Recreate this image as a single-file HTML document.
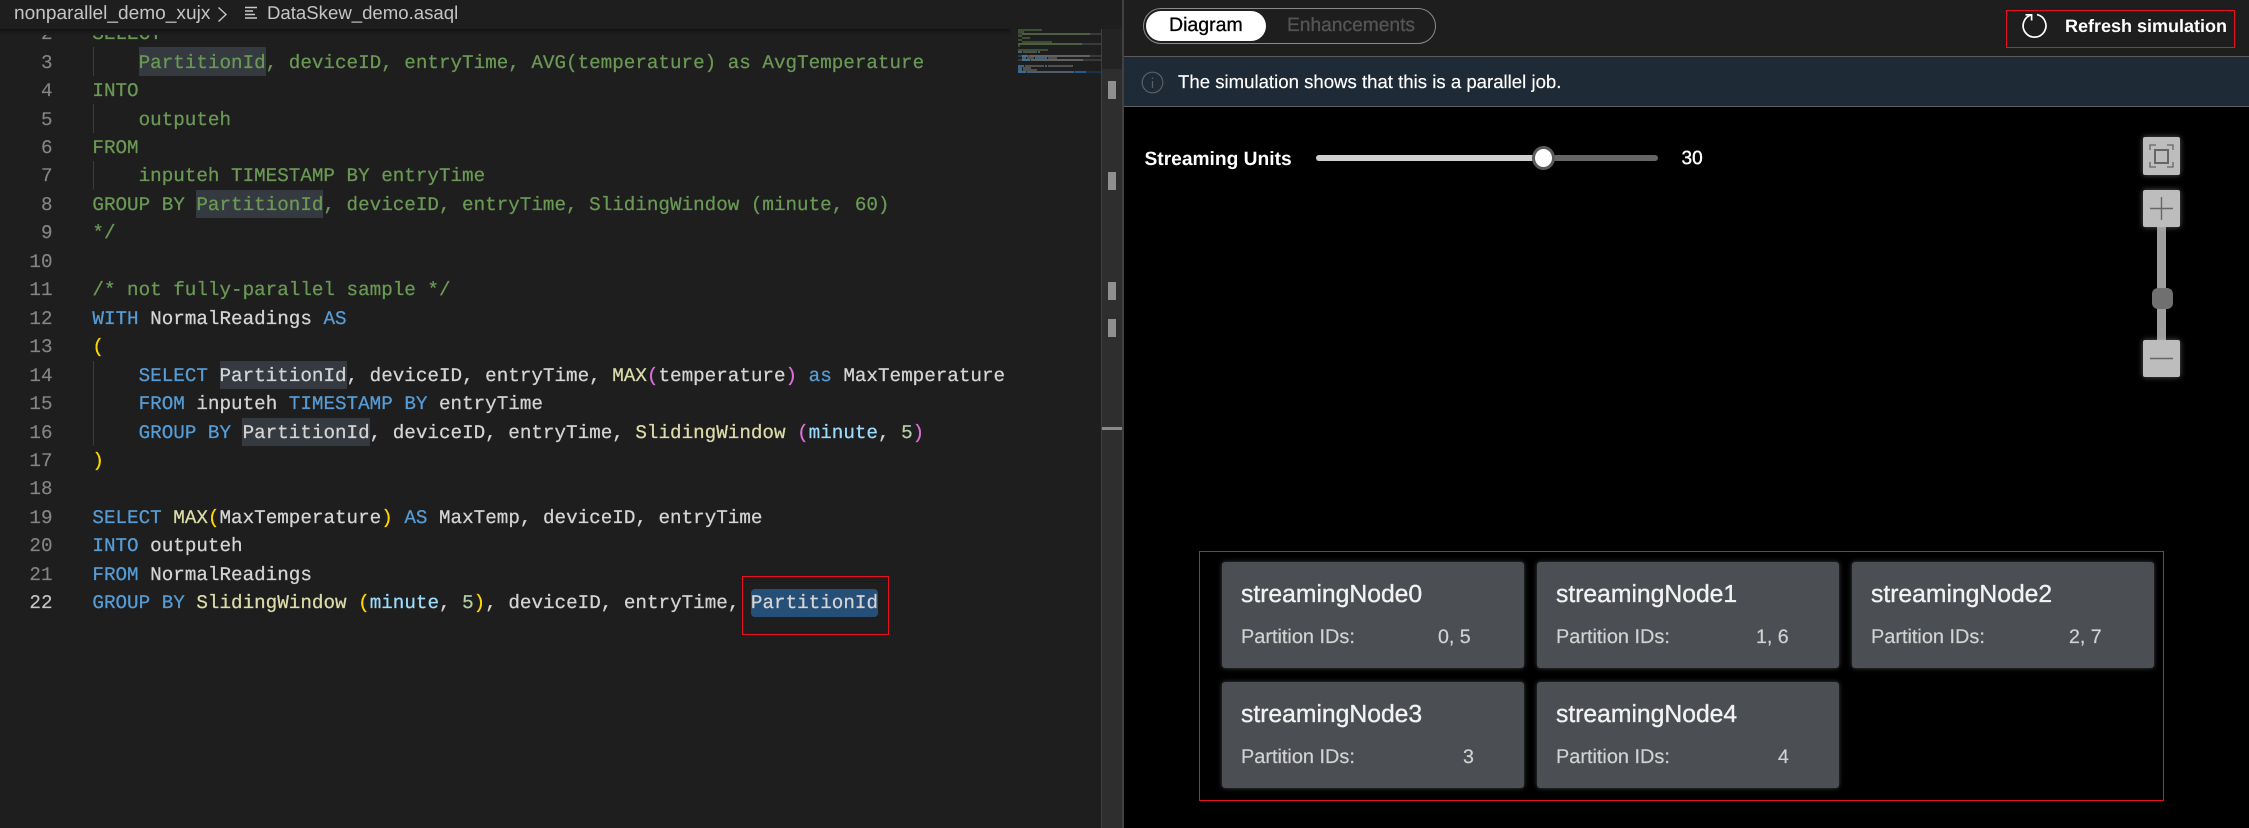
<!DOCTYPE html>
<html><head><meta charset="utf-8"><title>DataSkew_demo.asaql</title>
<style>
html,body{margin:0;padding:0;background:#000;width:2249px;height:828px;overflow:hidden}
*{box-sizing:border-box}
body{position:relative;font-family:"Liberation Sans",sans-serif;text-rendering:geometricPrecision}
.a{position:absolute}
.t{position:absolute;white-space:nowrap;line-height:1}
#left{left:0;top:0;width:1124px;height:828px;background:#1e1e1e;overflow:hidden}
#hdr{left:0;top:0;width:1124px;height:29px;background:#1e1e1e;z-index:5}
#shadow{left:0;top:29px;width:1010px;height:6px;background:linear-gradient(#131313,#1e1e1e);z-index:4}
#code{left:0;top:20.2px;width:1101px;font:19.25px/28.46px "Liberation Mono",monospace;color:#d4d4d4;z-index:2;-webkit-text-stroke:.25px}
#code div{height:28.46px;position:relative;white-space:pre;padding-left:92.4px}
#code div b{font-weight:normal;position:absolute;right:1048.5px;top:0;color:#858585;-webkit-text-stroke:.15px}
#code div.cur b{color:#c6c6c6}
.c{color:#6a9955}.k{color:#569cd6}.f{color:#dcdcaa}.g{color:#ffd700}.p{color:#da70d6}.v{color:#9cdcfe}.n{color:#b5cea8}
.hl{position:absolute;background:#343a40;z-index:1}
.ig{position:absolute;left:92.5px;width:1px;background:#3c3c3c;z-index:1}
.red{position:absolute;border:1.5px solid #e81123;z-index:6}
.card{position:absolute;width:302px;height:106px;background:#4b4e52;border-radius:3px;box-shadow:0 0 5px rgba(110,110,110,.6);filter:blur(.35px)}
.title{position:absolute;left:19px;top:21px;font-size:24.7px;line-height:1;color:#f2f2f2;white-space:nowrap;-webkit-text-stroke:.35px}
.pid{position:absolute;left:19px;top:66px;font-size:19.9px;line-height:1;color:#d2d2d2;white-space:nowrap;-webkit-text-stroke:.2px}
.val{position:absolute;top:66px;font-size:19.6px;line-height:1;color:#d2d2d2;white-space:nowrap;-webkit-text-stroke:.2px}
.zb{position:absolute;left:2143px;width:37px;background:#bdbdbd;border-radius:2px;box-shadow:0 0 6px rgba(200,200,200,.45)}
</style></head><body>

<div id="left" class="a">
  <div id="hdr" class="a">
    <span class="t" style="left:14px;top:4px;font-size:19.1px;color:#c4c4c4">nonparallel_demo_xujx</span>
    <svg class="a" style="left:216px;top:5px" width="12" height="20" viewBox="0 0 12 20"><path d="M2.5 2.5 L10 9.5 L2.5 16.5" fill="none" stroke="#c4c4c4" stroke-width="1.4"/></svg>
    <svg class="a" style="left:244px;top:6px" width="15" height="14" viewBox="0 0 15 14"><path d="M1 1.5H13M1 5H9M1 8.5H11M1 12H13" stroke="#c8c8c8" stroke-width="1.6" fill="none"/></svg>
    <span class="t" style="left:267px;top:4px;font-size:18.6px;color:#c4c4c4">DataSkew_demo.asaql</span>
  </div>
  <div id="shadow" class="a"></div>

  <div class="hl" style="left:139px;top:47px;width:127px;height:29px"></div>
  <div class="hl" style="left:196px;top:190px;width:127px;height:28px"></div>
  <div class="hl" style="left:220px;top:361px;width:127px;height:28px"></div>
  <div class="hl" style="left:242px;top:418px;width:128px;height:28px"></div>
  <div class="hl" style="left:751px;top:589px;width:127px;height:28px;background:#264f78;border-radius:4px"></div>

  <div class="ig" style="top:47px;height:29px"></div>
  <div class="ig" style="top:104px;height:29px"></div>
  <div class="ig" style="top:161px;height:29px"></div>
  <div class="ig" style="top:361px;height:85px"></div>

  <div id="code" class="a">
<div><b>2</b><span class="c">SELECT</span></div>
<div><b>3</b><span class="c">    PartitionId, deviceID, entryTime, AVG(temperature) as AvgTemperature</span></div>
<div><b>4</b><span class="c">INTO</span></div>
<div><b>5</b><span class="c">    outputeh</span></div>
<div><b>6</b><span class="c">FROM</span></div>
<div><b>7</b><span class="c">    inputeh TIMESTAMP BY entryTime</span></div>
<div><b>8</b><span class="c">GROUP BY PartitionId, deviceID, entryTime, SlidingWindow (minute, 60)</span></div>
<div><b>9</b><span class="c">*/</span></div>
<div><b>10</b> </div>
<div><b>11</b><span class="c">/* not fully-parallel sample */</span></div>
<div><b>12</b><span class="k">WITH</span> NormalReadings <span class="k">AS</span></div>
<div><b>13</b><span class="g">(</span></div>
<div><b>14</b>    <span class="k">SELECT</span> PartitionId, deviceID, entryTime, <span class="f">MAX</span><span class="p">(</span>temperature<span class="p">)</span> <span class="k">as</span> MaxTemperature</div>
<div><b>15</b>    <span class="k">FROM</span> inputeh <span class="k">TIMESTAMP BY</span> entryTime</div>
<div><b>16</b>    <span class="k">GROUP BY</span> PartitionId, deviceID, entryTime, <span class="f">SlidingWindow</span> <span class="p">(</span><span class="v">minute</span>, <span class="n">5</span><span class="p">)</span></div>
<div><b>17</b><span class="g">)</span></div>
<div><b>18</b> </div>
<div><b>19</b><span class="k">SELECT</span> <span class="f">MAX</span><span class="g">(</span>MaxTemperature<span class="g">)</span> <span class="k">AS</span> MaxTemp, deviceID, entryTime</div>
<div><b>20</b><span class="k">INTO</span> outputeh</div>
<div><b>21</b><span class="k">FROM</span> NormalReadings</div>
<div class="cur"><b>22</b><span class="k">GROUP BY</span> <span class="f">SlidingWindow</span> <span class="g">(</span><span class="v">minute</span>, <span class="n">5</span><span class="g">)</span>, deviceID, entryTime, PartitionId</div>
  </div>

  <div class="red" style="left:742px;top:576px;width:147px;height:59px"></div>

  <!-- minimap -->
  <svg class="a" style="left:1018px;top:29px;z-index:3" width="83" height="46" viewBox="0 0 83 46" shape-rendering="crispEdges">
    <g fill="#3a3a3a"><rect y="4" width="83" height="2"/><rect y="14" width="83" height="2"/><rect y="26" width="83" height="2"/><rect y="30" width="83" height="2"/></g>
    <rect y="42" width="83" height="2" fill="#17324f"/>
    <g fill="#6a9955" fill-opacity=".4">
      <rect x="0" y="0" width="24" height="2"/><rect y="2" width="6" height="2"/><rect x="4" y="4" width="68" height="2"/><rect y="6" width="4" height="2"/><rect x="4" y="8" width="8" height="2"/><rect y="10" width="4" height="2"/><rect x="4" y="12" width="30" height="2"/><rect y="14" width="64" height="2"/><rect y="16" width="2" height="2"/><rect y="20" width="30" height="2"/>
    </g>
    <g fill="#569cd6" fill-opacity=".55">
      <rect y="22" width="4" height="2"/><rect x="20" y="22" width="2" height="2"/><rect x="4" y="26" width="6" height="2"/><rect x="4" y="28" width="4" height="2"/><rect x="17" y="28" width="12" height="2"/><rect x="4" y="30" width="8" height="2"/><rect y="36" width="6" height="2"/><rect x="27" y="36" width="2" height="2"/><rect y="38" width="4" height="2"/><rect y="40" width="4" height="2"/><rect y="42" width="8" height="2"/>
    </g>
    <g fill="#b0b0b0" fill-opacity=".35">
      <rect x="5" y="22" width="14" height="2"/><rect x="11" y="26" width="61" height="2"/><rect x="9" y="28" width="7" height="2"/><rect x="30" y="28" width="9" height="2"/><rect x="13" y="30" width="52" height="2"/><rect x="7" y="36" width="19" height="2"/><rect x="30" y="36" width="25" height="2"/><rect x="5" y="38" width="8" height="2"/><rect x="5" y="40" width="14" height="2"/><rect x="9" y="42" width="47" height="2"/>
    </g>
    <rect x="57" y="42" width="11" height="2" fill="#255c92"/>
  </svg>

  <!-- scrollbar -->
  <div class="a" style="left:1101px;top:29px;width:21px;height:799px;background:#2e2e2e;border-left:1px solid #3f3f3f;z-index:3"></div>
  <div class="a" style="left:1102px;top:29px;width:20px;height:40px;background:#232323;z-index:3"></div>
  <div class="a" style="left:1108px;top:81px;width:8px;height:18px;background:#8f8f8f;z-index:3"></div>
  <div class="a" style="left:1108px;top:172px;width:8px;height:18px;background:#8f8f8f;z-index:3"></div>
  <div class="a" style="left:1108px;top:282px;width:8px;height:18px;background:#8f8f8f;z-index:3"></div>
  <div class="a" style="left:1108px;top:319px;width:8px;height:18px;background:#8f8f8f;z-index:3"></div>
  <div class="a" style="left:1102px;top:427px;width:20px;height:3px;background:#8a8a8a;z-index:3"></div>
  <div class="a" style="left:1122px;top:0;width:2px;height:828px;background:#414141;z-index:6"></div>
</div>

<!-- right header -->
<div class="a" style="left:1124px;top:0;width:1125px;height:56px;background:#1e1e1e"></div>
<div class="a" style="left:1124px;top:56px;width:1125px;height:1px;background:#5a5a5a"></div>
<div class="a" style="left:1124px;top:57px;width:1125px;height:49px;background:#1f2a37"></div>
<div class="a" style="left:1124px;top:106px;width:1125px;height:1px;background:#5f5f5f"></div>
<div class="a" style="left:1124px;top:107px;width:1125px;height:721px;background:#000"></div>

<div class="a" style="left:1143px;top:8px;width:293px;height:36px;border:1px solid #8a8a8a;border-radius:18px"></div>
<div class="a" style="left:1146px;top:11px;width:120px;height:30px;background:#fff;border-radius:15px"></div>
<span class="t" style="left:1169px;top:16px;font-size:19.5px;color:#000;-webkit-text-stroke:.3px">Diagram</span>
<span class="t" style="left:1287px;top:16px;font-size:19.2px;color:#555;-webkit-text-stroke:.3px">Enhancements</span>

<svg class="a" style="left:1141px;top:71px" width="23" height="23" viewBox="0 0 23 23"><circle cx="11.5" cy="11.5" r="10.3" fill="none" stroke="#5a5f66" stroke-width="1.2"/><path d="M11.5 10V17M11.5 6.5V8" stroke="#5a5f66" stroke-width="1.2"/></svg>
<span class="t" style="left:1178px;top:73px;font-size:18.6px;color:#fff;-webkit-text-stroke:.15px">The simulation shows that this is a parallel job.</span>

<div class="red" style="left:2006px;top:10px;width:229px;height:38px"></div>
<svg class="a" style="left:2015px;top:5px" width="40" height="40" viewBox="0 0 40 40"><path d="M16.3 9.8 A11.4 11.4 0 1 0 22 9.6" fill="none" stroke="#fff" stroke-width="1.7"/><path d="M10.5 9.8 H16.6 V15.5" fill="none" stroke="#fff" stroke-width="1.7"/></svg>
<span class="t" style="left:2065px;top:17px;font-size:18px;font-weight:bold;color:#fff">Refresh simulation</span>

<!-- slider -->
<span class="t" style="left:1144.5px;top:149.5px;font-size:19.2px;font-weight:bold;color:#fff">Streaming Units</span>
<div class="a" style="left:1316px;top:155px;width:342px;height:6px;background:#666;border-radius:3px"></div>
<div class="a" style="left:1316px;top:155px;width:228px;height:6px;background:#cfcfcf;border-radius:3px 0 0 3px"></div>
<div class="a" style="left:1532px;top:146px;width:23px;height:24px;background:#fff;border:3px solid #5a5a5a;border-radius:50%"></div>
<span class="t" style="left:1681.5px;top:149px;font-size:19px;color:#fff;-webkit-text-stroke:.4px">30</span>

<!-- zoom controls -->
<div class="zb" style="top:137px;height:38px"><svg width="37" height="38" viewBox="0 0 37 38"><path d="M7 13V8H13M24 8H30V13M7 25V30H13M24 30H30V25" fill="none" stroke="#666" stroke-width="1.3"/><rect x="12" y="13" width="13" height="13" fill="none" stroke="#666" stroke-width="2"/></svg></div>
<div class="a" style="left:2157px;top:226px;width:9px;height:115px;background:#9e9e9e"></div>
<div class="zb" style="top:190px;height:37px"><svg width="37" height="37" viewBox="0 0 37 37"><path d="M7 18.5H30M18.5 7V30" stroke="#666" stroke-width="1.4" fill="none"/></svg></div>
<div class="a" style="left:2152px;top:288px;width:21px;height:21px;background:#707070;border-radius:6px"></div>
<div class="zb" style="top:340px;height:37px"><svg width="37" height="37" viewBox="0 0 37 37"><path d="M7 18.5H30" stroke="#666" stroke-width="1.6" fill="none"/></svg></div>

<!-- nodes -->
<div class="red" style="left:1199px;top:551px;width:965px;height:250px"></div>
<div class="card" style="left:1222px;top:562px"><span class="title">streamingNode0</span><span class="pid">Partition IDs:</span><span class="val" style="left:216px">0, 5</span></div>
<div class="card" style="left:1537px;top:562px"><span class="title">streamingNode1</span><span class="pid">Partition IDs:</span><span class="val" style="left:219px">1, 6</span></div>
<div class="card" style="left:1852px;top:562px"><span class="title">streamingNode2</span><span class="pid">Partition IDs:</span><span class="val" style="left:217px">2, 7</span></div>
<div class="card" style="left:1222px;top:682px"><span class="title">streamingNode3</span><span class="pid">Partition IDs:</span><span class="val" style="left:241px">3</span></div>
<div class="card" style="left:1537px;top:682px"><span class="title">streamingNode4</span><span class="pid">Partition IDs:</span><span class="val" style="left:241px">4</span></div>
</body></html>
